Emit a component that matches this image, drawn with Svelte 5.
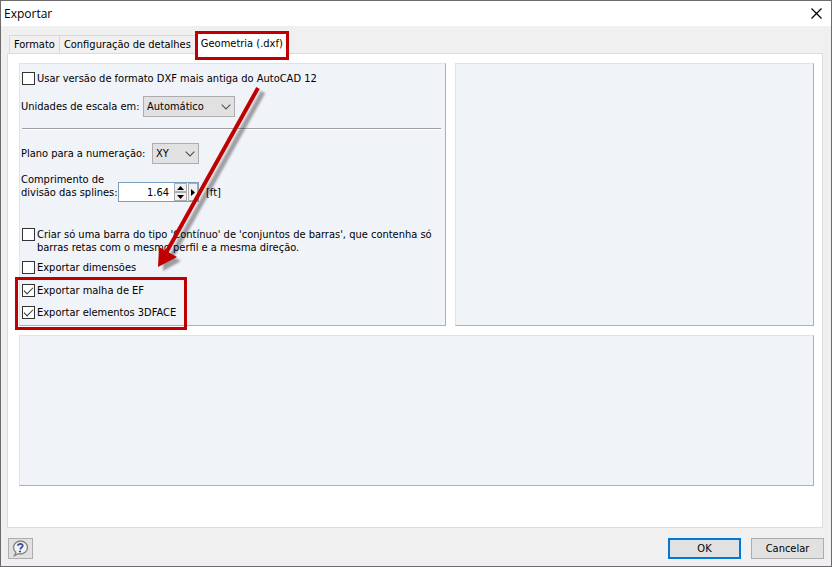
<script lang="ts">
  interface Tab {
    id: string;
    label: string;
  }

  const tabs: Tab[] = [
    { id: "format", label: "Formato" },
    { id: "details", label: "Configuração de detalhes" },
    { id: "dxf", label: "Geometria (.dxf)" },
  ];

  let activeTab = $state("dxf");
  let oldFormat = $state(false);
  let units = $state("auto");
  let plane = $state("XY");
  let splineLength = $state("1.64");
  let continuousMember = $state(false);
  let exportDimensions = $state(false);
  let exportMesh = $state(true);
  let export3dFace = $state(true);

  function step(delta: number): void {
    splineLength = (Number(splineLength) + delta).toFixed(2);
  }
</script>

<div class="dialog" role="dialog" aria-labelledby="dialog-title">
  <header class="titlebar">
    <h1 id="dialog-title">Exportar</h1>
    <button type="button" class="close" aria-label="Fechar">
      <svg width="11" height="11" viewBox="0 0 11 11" aria-hidden="true">
        <path d="M0.5 0.5 10.5 10.5M10.5 0.5 0.5 10.5" stroke="#000" stroke-width="1.2" />
      </svg>
    </button>
  </header>

  <div class="tabs" role="tablist">
    {#each tabs as tab (tab.id)}
      <button
        type="button"
        role="tab"
        class="tab"
        class:is-active={activeTab === tab.id}
        aria-selected={activeTab === tab.id}
        onclick={() => (activeTab = tab.id)}
      >{tab.label}</button>
    {/each}
  </div>

  <main class="page">
    <div class="columns">
      <section class="panel options">
        <label class="check">
          <input type="checkbox" bind:checked={oldFormat} />
          <span>Usar versão de formato DXF mais antiga do AutoCAD 12</span>
        </label>

        <div class="field field-units">
          <label for="units">Unidades de escala em:</label>
          <select id="units" bind:value={units}>
            <option value="auto">Automático</option>
          </select>
        </div>

        <hr />

        <div class="field field-plane">
          <label for="plane">Plano para a numeração:</label>
          <select id="plane" bind:value={plane}>
            <option>XY</option>
            <option>XZ</option>
            <option>YZ</option>
          </select>
        </div>

        <div class="field field-spline">
          <label for="spline">Comprimento de<br />divisão das splines:</label>
          <div class="spinner">
            <input id="spline" type="text" bind:value={splineLength} />
            <div class="steps">
              <button type="button" aria-label="Aumentar" onclick={() => step(0.1)}>
                <svg width="7" height="4" viewBox="0 0 7 4"><path d="M3.5 0 7 4H0z" /></svg>
              </button>
              <button type="button" aria-label="Diminuir" onclick={() => step(-0.1)}>
                <svg width="7" height="4" viewBox="0 0 7 4"><path d="M3.5 4 7 0H0z" /></svg>
              </button>
            </div>
            <button type="button" class="more" aria-label="Mais">
              <svg width="4" height="7" viewBox="0 0 4 7"><path d="M4 3.5 0 7V0z" /></svg>
            </button>
          </div>
          <span class="unit">[ft]</span>
        </div>

        <label class="check check-continuous">
          <input type="checkbox" bind:checked={continuousMember} />
          <span>
            Criar só uma barra do tipo 'Contínuo' de 'conjuntos de barras', que contenha só<br />
            barras retas com o mesmo perfil e a mesma direção.
          </span>
        </label>

        <label class="check check-dimensions">
          <input type="checkbox" bind:checked={exportDimensions} />
          <span>Exportar dimensões</span>
        </label>

        <div class="marked">
          <label class="check">
            <input type="checkbox" bind:checked={exportMesh} />
            <span>Exportar malha de EF</span>
          </label>
          <label class="check">
            <input type="checkbox" bind:checked={export3dFace} />
            <span>Exportar elementos 3DFACE</span>
          </label>
        </div>

        <svg class="arrow" width="130" height="200" viewBox="0 0 130 200" aria-hidden="true">
          <defs>
            <filter id="arrow-blur" x="-20%" y="-20%" width="140%" height="140%">
              <feGaussianBlur stdDeviation="1.3" />
            </filter>
          </defs>
          <g transform="translate(5 4)" opacity="0.35" filter="url(#arrow-blur)">
            <path d="M108 8 16 173" stroke="#000" stroke-width="5" />
            <path d="M8 187 8 167 26 177z" fill="#000" />
          </g>
          <path d="M108 8 16 173" stroke="#c00000" stroke-width="4" />
          <path d="M8 187 9 167 27 177z" fill="#c00000" />
        </svg>
      </section>

      <section class="panel"></section>
    </div>

    <section class="panel preview"></section>
  </main>

  <footer class="footer">
    <button type="button" class="btn help" aria-label="Ajuda">
      <svg width="17" height="17" viewBox="0 0 17 17" aria-hidden="true">
        <path
          d="M8.5 1C4.600 1 1.500 3.900 1.500 7.500c0 2 .9 3.700 2.300 4.900L2.500 15.500l3.800-1.800c.7.200 1.400.3 2.200.3 3.900 0 7-2.900 7-6.500S12.400 1 8.500 1z"
          fill="#f4f4f6"
          stroke="#858585"
          stroke-width="1.4"
        />
        <path d="M6 5.700C6.200 3.200 11 3.200 10.700 5.800 10.500 7.300 8.500 7.500 8.300 9.300" fill="none" stroke="#34479c" stroke-width="1.8" />
        <circle cx="8" cy="11.500" r="1.1" fill="#34479c" />
      </svg>
    </button>
    <button type="button" class="btn btn-default">OK</button>
    <button type="button" class="btn">Cancelar</button>
  </footer>
</div>

<style>
  :global(body) {
    background: #f0f0f0;
  }

  .dialog {
    box-sizing: border-box;
    min-height: 100vh;
    display: flex;
    flex-direction: column;
    border: 1px solid #6d6b6d;
    background: #f0f0f0;
    color: #000;
    font: 11px/13px Tahoma, "DejaVu Sans Condensed", sans-serif;
  }

  button,
  input,
  select {
    box-sizing: border-box;
    margin: 0;
    padding: 0;
    border-radius: 0;
    color: inherit;
    font: inherit;
  }

  .titlebar {
    display: flex;
    align-items: center;
    justify-content: space-between;
    height: 25px;
    padding: 0 9px 0 3px;
    background: #fff;
  }

  h1 {
    margin: 0;
    font: 12px/16px "Segoe UI", "Open Sans", sans-serif;
  }

  .close {
    display: flex;
    border: 0;
    background: none;
  }

  .tabs {
    display: flex;
    align-items: flex-end;
    height: 27px;
    padding-left: 8px;
  }

  .tab {
    height: 18px;
    padding: 0 4px;
    border: 1px solid #d9d9d9;
    border-width: 1px 0 0 1px;
    background: #f0f0f0;
    white-space: nowrap;
  }

  /* The highlight frame sits over the page edge */
  .tab.is-active {
    position: relative;
    z-index: 1;
    height: 20px;
    padding: 0 6px;
    border: 0;
  }

  .tab.is-active::before {
    content: "";
    position: absolute;
    inset: -2px 0 -7px;
    z-index: -1;
    border: 3px solid #c00000;
    background: #fff;
  }

  .page {
    flex: 1;
    display: flex;
    flex-direction: column;
    gap: 9px;
    margin: 0 8px 0 6px;
    padding: 9px 8px 41px 11px;
    border: 1px solid #dcdcdc;
    background: #fff;
  }

  .columns {
    display: grid;
    grid-template-columns: 427fr 359fr;
    gap: 9px;
  }

  .panel {
    border: 1px solid;
    border-color: #dbe4f0 #a6a6e8 #a6a6e8 #dbe4f0;
    background: #f0f3f8;
  }

  .preview {
    flex: 1;
    min-height: 100px;
  }

  .options {
    position: relative;
    display: flex;
    flex-direction: column;
    align-items: flex-start;
    padding: 8px 4px 6px 1px;
  }

  .check {
    display: flex;
    align-items: flex-start;
    gap: 2px;
    margin-left: 1px;
    white-space: nowrap;
  }

  .check input {
    appearance: none;
    flex: none;
    width: 13px;
    height: 13px;
    border: 1px solid #333;
    background: #fff;
  }

  .check input:checked::before {
    content: "";
    display: block;
    box-sizing: border-box;
    width: 9px;
    height: 5px;
    margin: 2px 1px;
    border: solid #333;
    border-width: 0 0 1px 1px;
    transform: rotate(-45deg);
  }

  .field {
    display: flex;
    align-items: center;
  }

  .field select {
    appearance: none;
    height: 21px;
    padding-left: 3px;
    border: 1px solid #adadad;
    background: #e1e1e1
      url("data:image/svg+xml,%3Csvg xmlns='http://www.w3.org/2000/svg' width='10' height='6'%3E%3Cpath d='M.7.700 5 5 9.300.7' fill='none' stroke='%23505050' stroke-width='1.1'/%3E%3C/svg%3E")
      no-repeat right 3px center;
  }

  .field-units {
    margin-top: 11px;
  }

  .field-units label {
    width: 122px;
  }

  .field-units select {
    width: 92px;
  }

  hr {
    align-self: stretch;
    margin: 11px 0 13px 1px;
    border: solid;
    border-width: 1px 0;
    border-color: #a0a0a0 transparent #fff;
  }

  .field-plane label {
    width: 131px;
  }

  .field-plane select {
    width: 47px;
  }

  .field-spline {
    align-items: flex-end;
    margin-top: 9px;
  }

  .field-spline label {
    width: 97px;
    padding-bottom: 3px;
    white-space: nowrap;
  }

  .spinner {
    box-sizing: border-box;
    display: flex;
    gap: 1px;
    width: 81px;
    height: 20px;
    border: 1px solid #7a9ebd;
    background: #fff;
  }

  .spinner input {
    flex: 1;
    min-width: 0;
    padding-right: 4px;
    border: 0;
    background: none;
    text-align: right;
  }

  .steps {
    display: flex;
    flex-direction: column;
  }

  .spinner button {
    display: flex;
    align-items: center;
    justify-content: center;
    border: 1px solid #adadad;
    background: #f0f0f0;
  }

  .steps button {
    width: 13px;
    height: 9px;
  }

  .spinner .more {
    width: 10px;
  }

  .unit {
    padding: 0 0 3px 7px;
  }

  .check-continuous {
    margin-top: 26px;
  }

  .check-dimensions {
    margin-top: 7px;
  }

  .marked {
    position: relative;
    display: flex;
    flex-direction: column;
    gap: 9px;
    margin-top: 10px;
  }

  .marked::after {
    content: "";
    position: absolute;
    inset: -7px -11px -11px -6px;
    border: 3px solid #c00000;
    pointer-events: none;
  }

  .arrow {
    position: absolute;
    top: 16px;
    left: 130px;
    pointer-events: none;
  }

  .footer {
    display: flex;
    gap: 10px;
    padding: 10px 7px 7px;
  }

  .btn {
    width: 73px;
    height: 21px;
    border: 1px solid #adadad;
    background: #e1e1e1;
  }

  .btn-default {
    border: 2px solid #0078d7;
  }

  .help {
    display: flex;
    align-items: center;
    justify-content: center;
    width: 25px;
    margin-right: auto;
  }
</style>
